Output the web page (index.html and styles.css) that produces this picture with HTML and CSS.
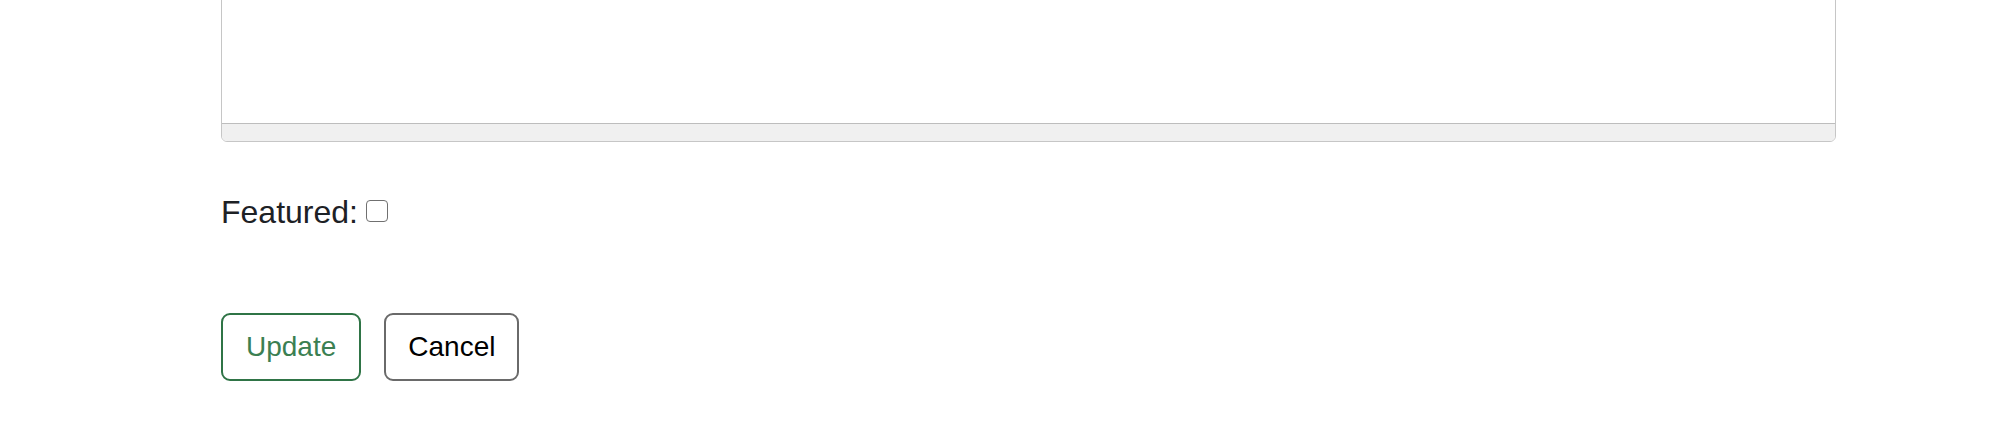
FILE: index.html
```html
<!DOCTYPE html>
<html>
<head>
<meta charset="utf-8">
<link rel="stylesheet" href="styles.css">
</head>
<body>
<form class="form">
  <div class="editor">
    <div class="editor-area"></div>
    <div class="editor-status"></div>
  </div>
  <div class="field">
    <label class="field-label" for="featured">Featured:</label>
    <input class="checkbox" type="checkbox" id="featured">
  </div>
  <div class="actions">
    <button type="button" class="btn btn-primary">Update</button>
    <button type="button" class="btn btn-secondary">Cancel</button>
  </div>
</form>
</body>
</html>
```
FILE: styles.css
```css
html, body {
  margin: 0;
  padding: 0;
  background: #ffffff;
}
body {
  font-family: "Liberation Sans", Arial, sans-serif;
  width: 2000px;
  height: 448px;
  overflow: hidden;
}
.form {
  display: flex;
  flex-direction: column;
  padding-left: 221px;
  width: 1615px;
}
.editor {
  margin-top: -20px;
  border: 1px solid #c6c6c6;
  border-radius: 0 0 6px 6px;
  overflow: hidden;
}
.editor-area {
  height: 142px;
  background: #ffffff;
  border-bottom: 1px solid #bdbdbd;
}
.editor-status {
  height: 17px;
  background: #f0f0f0;
}
.field {
  display: flex;
  align-items: center;
  gap: 8px;
  margin-top: 52px;
  height: 37px;
}
.field-label {
  font-size: 32px;
  line-height: 37px;
  color: #1d2125;
}
.checkbox {
  appearance: none;
  -webkit-appearance: none;
  margin: -3px 0 0 0;
  width: 22px;
  height: 22px;
  box-sizing: border-box;
  border: 1.5px solid #707070;
  border-radius: 4px;
  background: #ffffff;
}
.actions {
  display: flex;
  gap: 23px;
  margin-top: 82px;
}
.btn {
  font-family: "Liberation Sans", Arial, sans-serif;
  font-size: 28px;
  line-height: 32px;
  height: 68px;
  padding: 0 23px;
  background: #ffffff;
  border-radius: 9px;
  box-sizing: border-box;
}
.btn-primary {
  color: #3b7f52;
  border: 2px solid #2f7446;
}
.btn-secondary {
  color: #000000;
  border: 2px solid #6a6a6a;
  padding: 0 22px;
}
```
